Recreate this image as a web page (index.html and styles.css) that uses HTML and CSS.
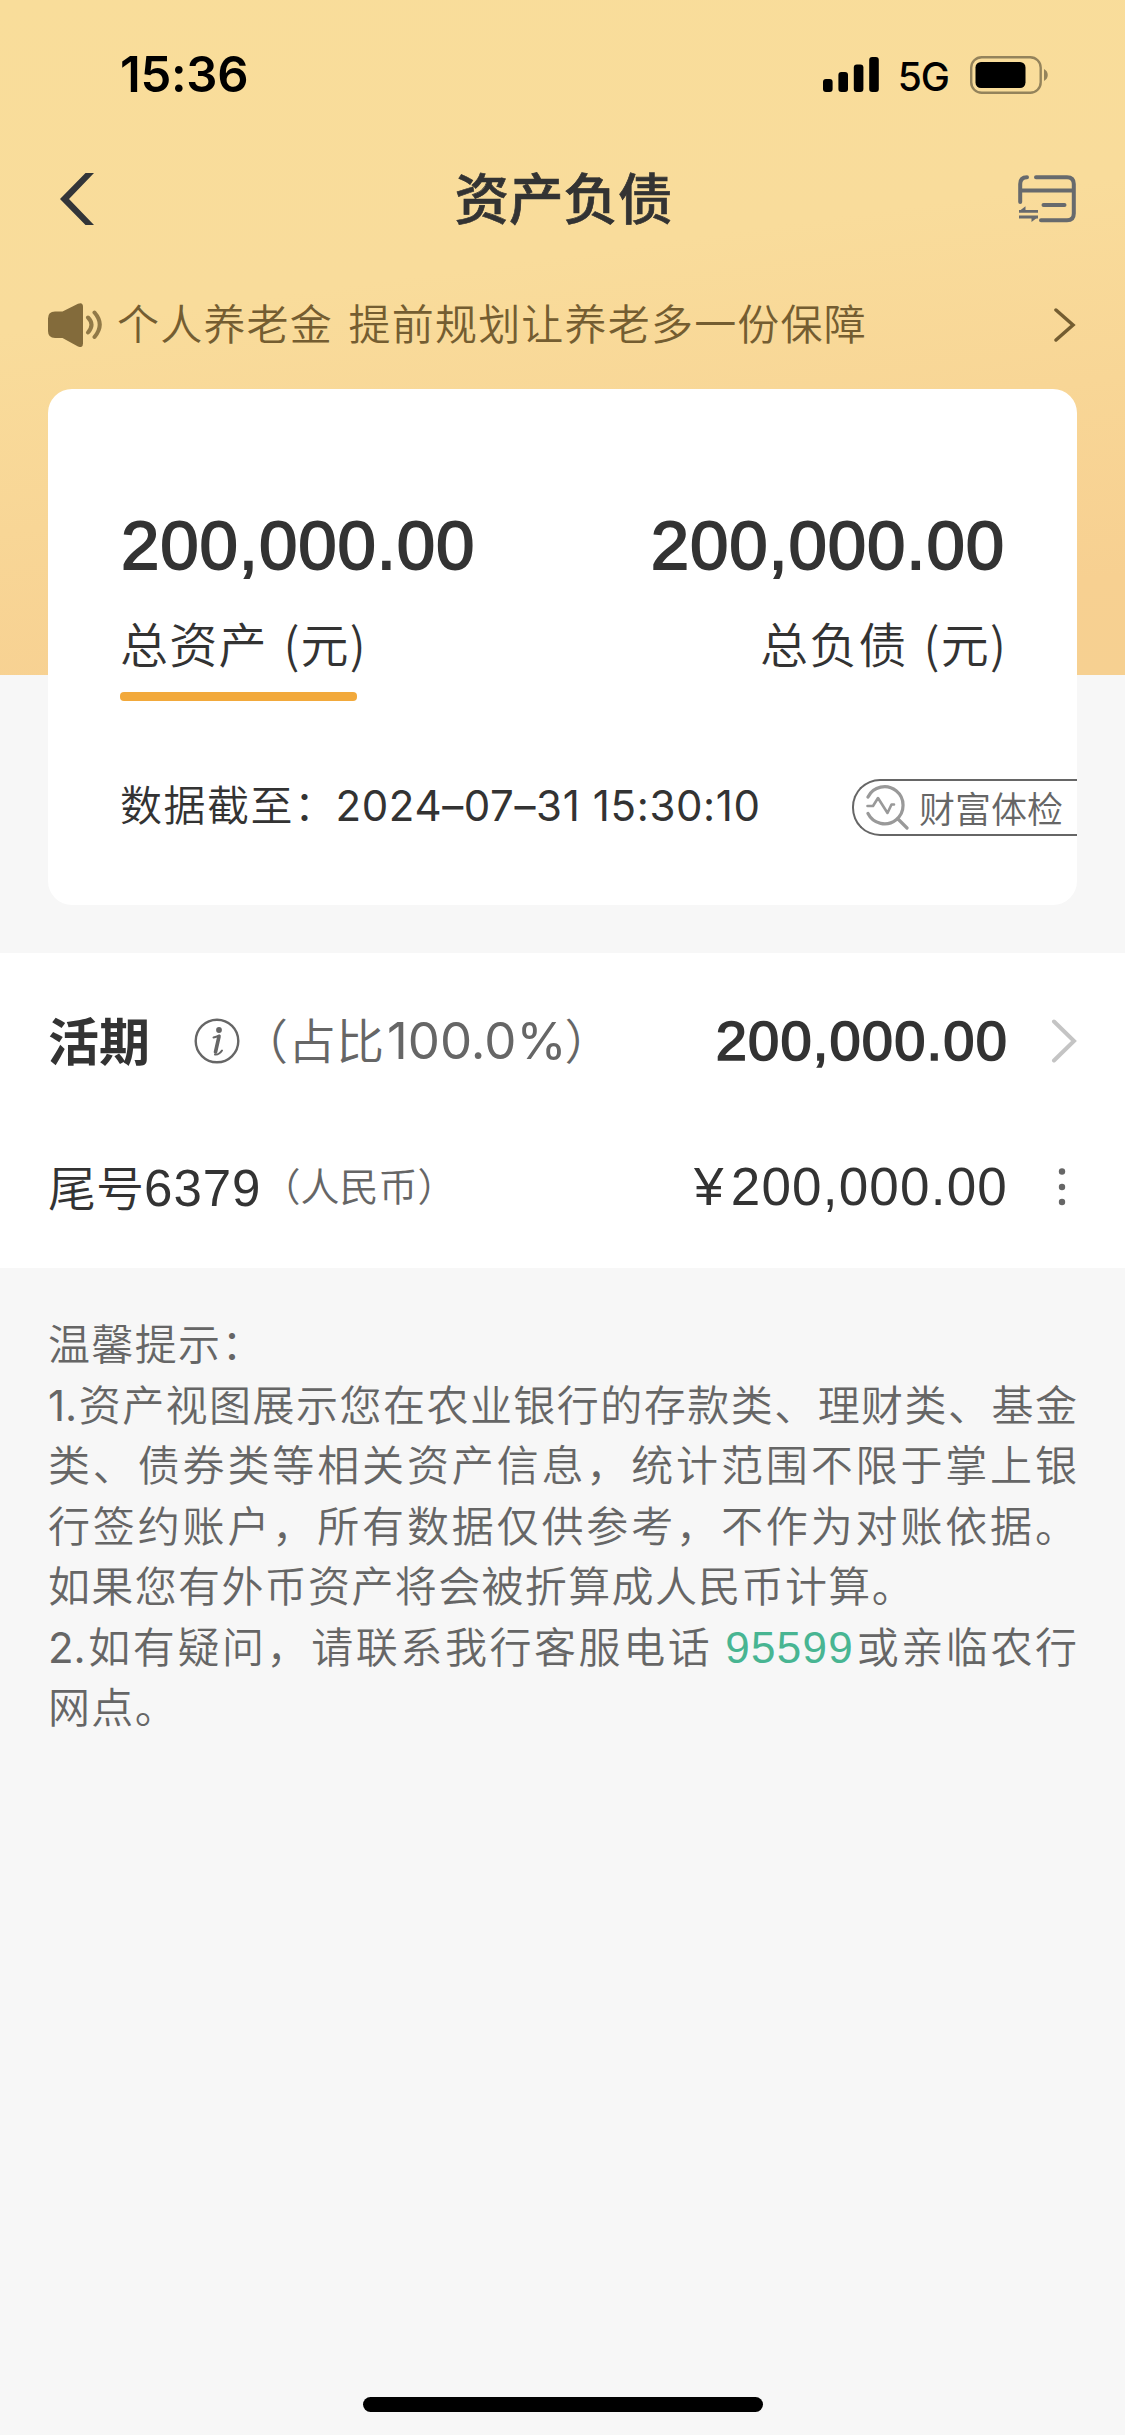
FILE: index.html
```html
<!DOCTYPE html>
<html lang="zh-CN">
<head>
<meta charset="utf-8">
<title>资产负债</title>
<link rel="stylesheet" href="styles.css">
</head>
<body>
<div class="page">
  <header class="status-bar">
    <span class="clock">15:36</span>
    <div class="status-icons">
      <svg class="signal" width="56" height="36" viewBox="0 0 56 36"><rect x="0" y="22" width="9.6" height="13" rx="3"/><rect x="15.4" y="15" width="9.6" height="20" rx="3"/><rect x="30.8" y="7.500" width="9.6" height="27.500" rx="3"/><rect x="46.200" y="0" width="9.6" height="35" rx="3"/></svg>
      <span class="network">5G</span>
      <svg class="battery" width="79" height="38" viewBox="0 0 79 38"><rect x="1.200" y="1.200" width="69.500" height="35.600" rx="10.500" fill="none" stroke="#94835b" stroke-width="2.400"/><rect x="5.500" y="6" width="50" height="26" rx="5.500"/><path d="M74 13c5 2.500 5 9.500 0 12z" fill="#94835b"/></svg>
    </div>
  </header>

  <nav class="nav-bar">
    <svg class="back" width="34" height="52" viewBox="0 0 34 52"><path d="M25.500 0H34L9 26l25 26h-8.500L0 26z" fill="#333538"/></svg>
    <h1 class="title">资产负债</h1>
    <svg class="card-icon" width="58" height="48" viewBox="0 0 58 48" fill="none" stroke="#676a6d" stroke-width="4" stroke-linecap="round"><path d="M2.200 27V9q0-6.800 6.800-6.800M18 2.200H49q6.800 0 6.800 6.800V38.500q0 6.800-6.800 6.800H23"/><path d="M3 15.600H55M25.500 30H46.500" /><path d="M1 36.300H20M1 42H20" stroke-width="2.800" stroke-linecap="butt"/><path d="M1 36.300L7.500 31.200V36M13.500 42V47L20 42" fill="#676a6d" stroke="none"/></svg>
  </nav>

  <div class="notice">
    <svg class="speaker" width="56" height="44" viewBox="0 0 56 44"><path d="M7 8.500H14.500L30 .700q5-2 5 3V40.500q0 5-5 3L14.500 35H7q-7 0-7-7V15.500q0-7 7-7z" fill="#836b3b"/><path d="M40 14.500q7 7 0 15M46.500 9.500q10.500 12 0 24.500" fill="none" stroke="#917947" stroke-width="4" stroke-linecap="round"/></svg>
    <span class="notice-text">个人养老金 提前规划让养老多一份保障</span>
    <svg class="notice-arrow" width="22" height="34" viewBox="0 0 22 34"><path d="M2 2L19 17 2 32" fill="none" stroke="#745d31" stroke-width="3.500" stroke-linecap="round"/></svg>
  </div>

  <section class="summary">
    <div class="totals">
      <div class="total">
        <div class="amount">200,000.00</div>
        <div class="label">总资产 (元)</div>
        <div class="underline"></div>
      </div>
      <div class="total total-right">
        <div class="amount">200,000.00</div>
        <div class="label">总负债 (元)</div>
      </div>
    </div>
    <div class="as-of">
      <div class="as-of-text"><span class="as-of-label">数据截至：</span><span class="as-of-time">2024–07–31 15:30:10</span></div>
      <div class="checkup">
        <svg width="43" height="45" viewBox="0 0 43 45" fill="none" stroke="#999" stroke-width="3.200" stroke-linecap="round" stroke-linejoin="round"><path d="M2 12A18.500 18.500 0 1 1 2 28.500"/><path d="M32 34L41 43"/><path d="M1.500 21H7L12 13 21.500 28 25.500 19.500H28" stroke-width="2.600"/></svg>
        <span>财富体检</span>
      </div>
    </div>
  </section>

  <section class="accounts">
    <div class="row">
      <div class="row-name"><span class="kind">活期</span>
        <svg class="info" width="46" height="46" viewBox="0 0 46 46" fill="none" stroke="#666" stroke-linecap="round"><circle cx="23" cy="23" r="21.300" stroke-width="2.400"/><circle cx="25" cy="12" r="2.900" fill="#666" stroke="none"/><path d="M19.500 19.500Q22 19 25.500 17.500" stroke-width="2"/><path d="M25 18.500L21.500 34" stroke-width="3.600"/><path d="M21 36.500q4 .5 7-4" stroke-width="2"/></svg>
        <span class="ratio">（占比<span class="ratio-num">100.0%</span><span class="paren-close">）</span></span></div>
      <div class="row-amount strong">200,000.00</div>
      <svg class="row-arrow" width="26" height="44" viewBox="0 0 26 44"><path d="M3 2.500L23 22 3 41.500" fill="none" stroke="#c4c4c4" stroke-width="4" stroke-linecap="round"/></svg>
    </div>
    <div class="row">
      <div class="row-name"><span class="tail">尾号<span class="tail-num">6379</span></span><span class="currency">（人民币<span class="paren-close">）</span></span></div>
      <div class="row-amount"><span class="yen">¥</span>200,000.00</div>
      <svg class="row-more" width="26" height="44" viewBox="0 0 26 44" fill="#666"><circle cx="11" cy="6.500" r="3.200"/><circle cx="11" cy="22" r="3.200"/><circle cx="11" cy="37" r="3.200"/></svg>
    </div>
  </section>

  <section class="tips">
    <p>温馨提示：</p>
    <p class="full"><span class="tip-num">1.</span>资产视图展示您在农业银行的存款类、理财类、基金</p>
    <p class="full">类、债券类等相关资产信息，统计范围不限于掌上银</p>
    <p class="full">行签约账户，所有数据仅供参考，不作为对账依据。</p>
    <p>如果您有外币资产将会被折算成人民币计算。</p>
    <p class="full"><span class="tip-num">2.</span>如有疑问，请联系我行客服电话 <a class="phone">95599</a>或亲临农行</p>
    <p>网点。</p>
  </section>

  <div class="home-indicator"></div>
</div>
</body>
</html>
```

FILE: styles.css
```css
* { box-sizing: border-box; }
body { margin: 0; }
svg { display: block; flex: none; }

.page {
  display: flex;
  flex-direction: column;
  width: 1125px;
  height: 2435px;
  overflow: hidden;
  background: linear-gradient(172deg, #f9dd9a 0%, #f9dc9b 40%, #f7d091 88%, #f6d091 100%) no-repeat 0 0 / 100% 675px, #f7f7f7;
  color: #333;
  font-family: "Noto Sans CJK SC", sans-serif;
  font-weight: 350;
  white-space: nowrap;
}

.status-bar {
  display: flex;
  align-items: center;
  justify-content: space-between;
  height: 149px;
  padding: 0 76px 0 120px;
  color: #000;
  font-family: Inter, sans-serif;
}
.clock { font-size: 49px; font-weight: 600; letter-spacing: -0.3px; }
.status-icons { display: flex; align-items: center; }
.network { margin: 3px 21px 0 19px; font-size: 39px; font-weight: 500; letter-spacing: -1px; }

.nav-bar {
  display: flex;
  align-items: center;
  justify-content: space-between;
  height: 100px;
  padding: 0 49px 0 60px;
}
.title {
  margin: -6px 0 0;
  padding-left: 15px;
  font-size: 54.5px;
  line-height: 80px;
  font-weight: 500;
  -webkit-text-stroke: 0.7px #333;
}

.notice {
  display: flex;
  align-items: center;
  height: 140px;
  padding: 12px 49px 0 48px;
  color: #745d31;
}
.notice-text { flex: 1; margin: -6px 0 0 13px; font-size: 42px; letter-spacing: 1.2px; word-spacing: 5px; line-height: 60px; }

.summary {
  height: 516px;
  margin: 0 48px;
  padding: 121px 0 0 72px;
  border-radius: 24px;
  background: #fff;
  overflow: hidden;
}
.totals { display: flex; justify-content: space-between; height: 251px; padding-right: 72px; }
.total-right { text-align: right; }
.amount {
  margin-left: 1px;
  font: 400 69px/72px "Liberation Sans", sans-serif;
  letter-spacing: 0.9px;
  -webkit-text-stroke: 1.8px #333;
}
.label { margin-top: 24px; font-size: 48px; line-height: 72px; letter-spacing: 1.2px; word-spacing: 4px; }
.total-right .label { margin-right: -2px; }
.underline { width: 237px; height: 9px; margin-top: 14px; border-radius: 4px; background: #f2a93b; }

.as-of { display: flex; align-items: center; justify-content: space-between; height: 92px; }
.as-of-text { display: flex; align-items: baseline; margin-top: -6px; font-size: 42px; letter-spacing: 1.5px; }
.as-of-time { margin-left: -2px; font: 400 42px/60px Inter, sans-serif; letter-spacing: 0.62px; }
.checkup {
  display: flex;
  align-items: center;
  gap: 10px;
  width: 225px;
  height: 57px;
  padding-left: 12px;
  border: 2px solid #666;
  border-right: 0;
  border-radius: 28px 0 0 28px;
  color: #666;
  font-size: 36px;
  line-height: 50px;
}

.accounts { height: 315px; margin-top: 48px; padding-top: 13px; background: #fff; }
.row { display: flex; align-items: center; height: 146px; padding: 0 48px; }
.row-name { display: flex; align-items: center; flex: 1; }
.kind { font-size: 51px; font-weight: 700; }
.info { margin: 3px 0 0 44px; }
.ratio { margin-top: -2px; color: #666; font-size: 48px; }
.ratio-num { margin-left: 3px; font: 400 51px/60px Inter, sans-serif; }
.row-amount { margin-top: 3px; font: 400 53px/70px "Liberation Sans", sans-serif; letter-spacing: 1.2px; }
.row-amount.strong { font-size: 56px; letter-spacing: 1.2px; -webkit-text-stroke: 1.7px #333; }
.yen { margin-right: 6px; }
.row-arrow, .row-more { margin: 3px 0 0 43px; }
.row-more { margin-top: 4px; }
.tail { font-size: 48px; }
.tail-num { font: 400 51px/60px "Liberation Sans", sans-serif; letter-spacing: 1px; }
.currency { margin-top: -2px; color: #666; font-size: 39px; }
.ratio .paren-close { margin-left: -2px; }

.tips { padding: 44px 48px 0; color: #666; font-size: 42px; line-height: 60.5px; letter-spacing: 1.35px; }
.tips p { margin: 0; height: 60.5px; }
.tips .full { text-align: justify; text-align-last: justify; letter-spacing: 0; }
.tip-num { font: 400 42px/50px Inter, sans-serif; }
.phone { margin-left: 1px; font: 400 44px/50px "Liberation Sans", sans-serif; color: #48b592; letter-spacing: 1.3px; }

.home-indicator { width: 400px; height: 15px; margin: auto auto 23px 363px; border-radius: 8px; background: #000; }
```
